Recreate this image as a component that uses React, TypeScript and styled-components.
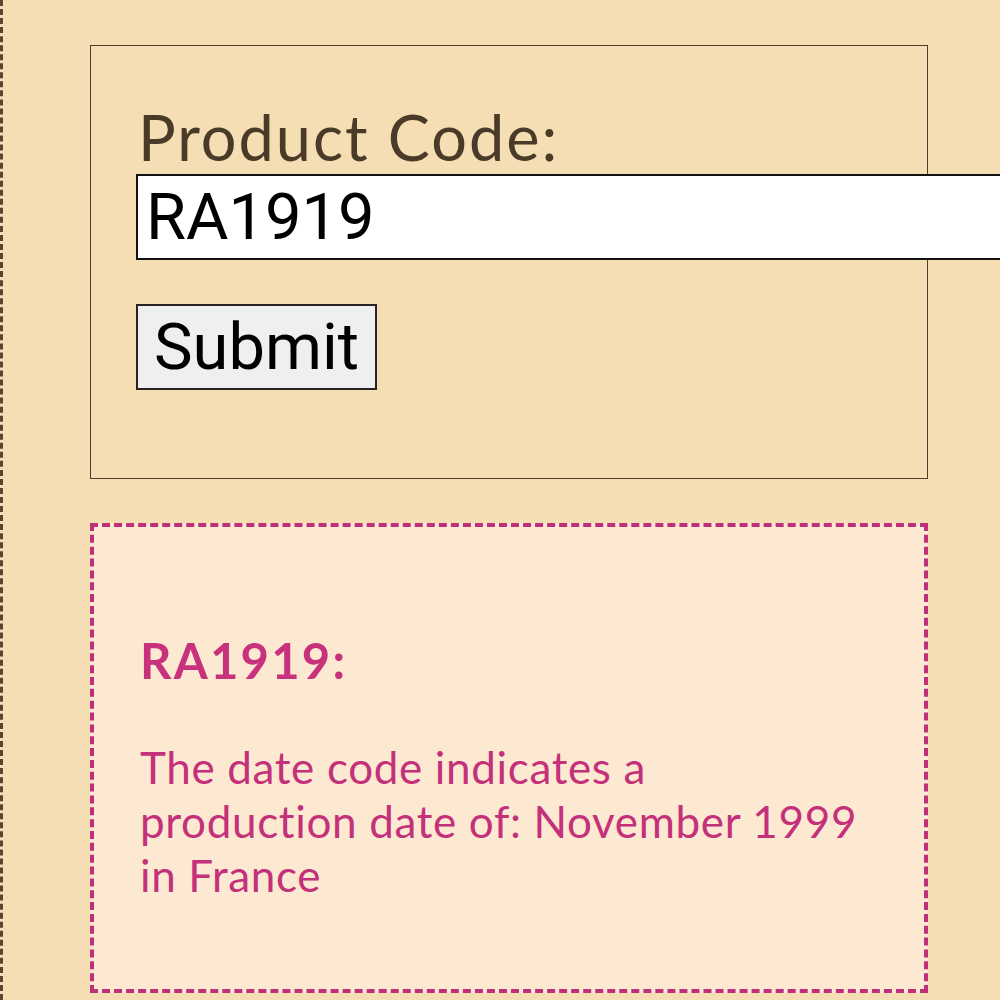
import React, { useState } from "react";
import styled, { createGlobalStyle } from "styled-components";

const GlobalStyle = createGlobalStyle`
    html, body {
        margin: 0;
        padding: 0;
        background: #f5ddb4;
        overflow: hidden;
    }
`;

const App: React.FC = () => {
    const [code, setCode] = useState<string>("RA1919");

    return (
        <>
            <GlobalStyle />
            <Page>
                <FormBox onSubmit={(e) => e.preventDefault()}>
                    <Label htmlFor="code">Product Code:</Label>
                    <CodeInput id="code" value={code} onChange={(e) => setCode(e.target.value)} />
                    <SubmitButton type="submit">Submit</SubmitButton>
                </FormBox>
                <ResultBox>
                    <ResultTitle>RA1919:</ResultTitle>
                    <ResultText>
                        The date code indicates a<br />
                        production date of: November 1999<br />
                        in France
                    </ResultText>
                </ResultBox>
            </Page>
        </>
    );
};

export default App;

const Page = styled.div`
    min-height: 1000px;
    box-sizing: border-box;
    border-left: 3px dashed #5a4630;
    padding: 45px 72px 0 87px;
    display: flex;
    flex-direction: column;
    gap: 44px;
`;

const FormBox = styled.form`
    border: 1px solid #4e3d2c;
    padding: 53px 0 88px 45px;
    display: flex;
    flex-direction: column;
    align-items: flex-start;
`;

const Label = styled.label`
    font-family: Lato, "Open Sans", sans-serif;
    font-size: 63px;
    line-height: 75px;
    letter-spacing: 2px;
    color: #4a3a28;
    padding-left: 2px;
`;

const CodeInput = styled.input`
    box-sizing: border-box;
    width: 900px;
    margin-right: -200px;
    height: 86px;
    border: 2px solid #111;
    background: #fff;
    padding: 0 8px;
    font-family: Roboto, sans-serif;
    font-size: 65px;
    color: #000;
    outline: none;
`;

const SubmitButton = styled.button`
    margin-top: 44px;
    box-sizing: border-box;
    height: 86px;
    padding: 0 16px;
    border: 2px solid #2a2320;
    background: #efefef;
    font-family: Roboto, sans-serif;
    font-size: 65px;
    color: #000;
`;

const ResultBox = styled.div`
    box-sizing: border-box;
    height: 470px;
    border: 4px dashed #c0307a;
    background: #fde9d2;
    padding: 104px 46px 0 46px;
`;

const ResultTitle = styled.h2`
    margin: 0;
    font-family: Lato, "Open Sans", sans-serif;
    font-weight: 700;
    font-size: 49px;
    line-height: 58px;
    letter-spacing: 2.2px;
    color: #c8327c;
`;

const ResultText = styled.p`
    margin: 51px 0 0;
    font-family: Lato, "Open Sans", sans-serif;
    font-size: 44px;
    line-height: 54px;
    letter-spacing: 0.65px;
    color: #c4317a;
`;
